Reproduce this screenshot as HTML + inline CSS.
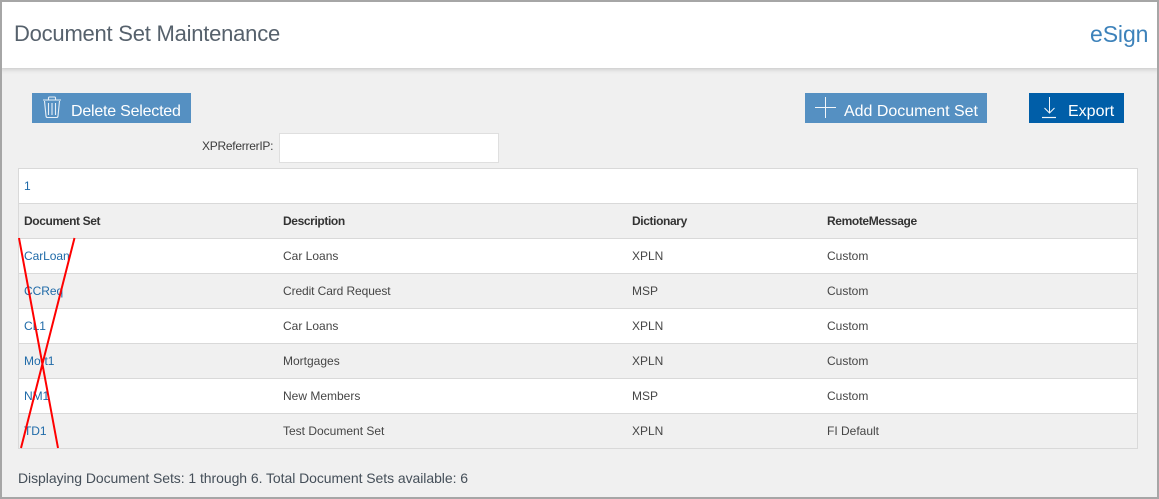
<!DOCTYPE html>
<html lang="en">
<head>
<meta charset="utf-8">
<title>Document Set Maintenance</title>
<style>
html,body{margin:0;padding:0;}
body{width:1159px;height:499px;overflow:hidden;background:#f0f0f0;font-family:"Liberation Sans",Arial,sans-serif;position:relative;}
.frame{position:absolute;left:0;top:0;width:1155px;height:495px;border:2px solid #a6a6a6;z-index:5;pointer-events:none;}
.hdr{position:absolute;left:0;top:0;width:1159px;height:68px;background:#fff;box-shadow:0 1px 5px rgba(0,0,0,.2);}
.t{position:absolute;white-space:nowrap;line-height:16px;}
.h1{left:14px;top:21px;font-size:22px;line-height:26px;color:#56616c;letter-spacing:-.23px;}
.brand{left:1090px;top:21px;font-size:23px;line-height:26px;color:#3d82ba;letter-spacing:-.1px;}
.btn{position:absolute;top:93px;height:30px;background:#5590c2;color:#fff;}
.btn span{position:absolute;top:10px;white-space:nowrap;font-size:16px;line-height:18px;}
.btn svg{position:absolute;left:0;top:0;}
.lbl{left:202px;top:138px;font-size:12px;color:#3c3c3c;letter-spacing:-.27px;}
.inp{position:absolute;left:279px;top:133px;width:218px;height:28px;background:#fff;border:1px solid #dfdfdf;}
.tbl{position:absolute;left:18px;top:168px;width:1118px;height:279px;border:1px solid #d9d9d9;background:#fff;}
.r{position:absolute;left:0;width:1118px;height:34px;border-top:1px solid #d9d9d9;}
.g{background:#f0f0f0;}
.c{font-size:12px;color:#454545;}
.b{font-weight:bold;color:#333;font-size:12px;letter-spacing:-.38px;}
.a{font-size:12px;color:#1f6aa8;letter-spacing:-.05px;}
.foot{left:18px;top:470px;font-size:14px;color:#454f59;letter-spacing:-.06px;}
svg.x{position:absolute;left:0;top:0;z-index:3;}
</style>
</head>
<body>
<div class="hdr"></div>
<div class="t h1">Document Set Maintenance</div>
<div class="t brand">eSign</div>

<div class="btn" style="left:32px;width:159px;">
<svg width="40" height="30" viewBox="0 0 40 30" fill="none" stroke="#e6eff7" stroke-width="1.1">
<path d="M11 7H29M16.500 7V5Q16.500 4 17.500 4H22.500Q23.500 4 23.500 5V7"/>
<path d="M12.500 8L14 23Q14.200 24.500 15.500 24.500H24.500Q25.800 24.500 26 23L27.500 8"/>
<path d="M16.500 10V22M20 10V22M23.500 10V22"/>
</svg>
<span style="left:39px;letter-spacing:-.22px;">Delete Selected</span>
</div>

<div class="btn" style="left:805px;width:182px;">
<svg width="40" height="30" viewBox="0 0 40 30" fill="none" stroke="#f2f6fa" stroke-width="1">
<path d="M20.500 4V25M10 14.500H31"/>
</svg>
<span style="left:39px;letter-spacing:-.02px;">Add Document Set</span>
</div>

<div class="btn" style="left:1029px;width:95px;background:#005ea8;">
<svg width="40" height="30" viewBox="0 0 40 30" fill="none" stroke="#f2f6fa" stroke-width="1">
<path d="M20.500 4V20M15.500 15L20.500 20L25.500 15"/>
<path d="M13 24.500H27" stroke-width="1.200"/>
</svg>
<span style="left:39px;">Export</span>
</div>

<div class="t lbl">XPReferrerIP:</div>
<div class="inp"></div>

<div class="tbl">
<div class="t a" style="left:5px;top:9px;">1</div>
<div class="r g" style="top:34px;">
<div class="t b" style="left:5px;top:9px;">Document Set</div>
<div class="t b" style="left:264px;top:9px;">Description</div>
<div class="t b" style="left:613px;top:9px;">Dictionary</div>
<div class="t b" style="left:808px;top:9px;">RemoteMessage</div>
</div>
<div class="r" style="top:69px;">
<div class="t a" style="left:5px;top:9px;">CarLoan</div>
<div class="t c" style="left:264px;top:9px;">Car Loans</div>
<div class="t c" style="left:613px;top:9px;">XPLN</div>
<div class="t c" style="left:808px;top:9px;">Custom</div>
</div>
<div class="r g" style="top:104px;">
<div class="t a" style="left:5px;top:9px;">CCReq</div>
<div class="t c" style="left:264px;top:9px;letter-spacing:-.1px;">Credit Card Request</div>
<div class="t c" style="left:613px;top:9px;">MSP</div>
<div class="t c" style="left:808px;top:9px;">Custom</div>
</div>
<div class="r" style="top:139px;">
<div class="t a" style="left:5px;top:9px;">CL1</div>
<div class="t c" style="left:264px;top:9px;">Car Loans</div>
<div class="t c" style="left:613px;top:9px;">XPLN</div>
<div class="t c" style="left:808px;top:9px;">Custom</div>
</div>
<div class="r g" style="top:174px;">
<div class="t a" style="left:5px;top:9px;">Mort1</div>
<div class="t c" style="left:264px;top:9px;">Mortgages</div>
<div class="t c" style="left:613px;top:9px;">XPLN</div>
<div class="t c" style="left:808px;top:9px;">Custom</div>
</div>
<div class="r" style="top:209px;">
<div class="t a" style="left:5px;top:9px;">NM1</div>
<div class="t c" style="left:264px;top:9px;">New Members</div>
<div class="t c" style="left:613px;top:9px;">MSP</div>
<div class="t c" style="left:808px;top:9px;">Custom</div>
</div>
<div class="r g" style="top:244px;">
<div class="t a" style="left:5px;top:9px;">TD1</div>
<div class="t c" style="left:264px;top:9px;">Test Document Set</div>
<div class="t c" style="left:613px;top:9px;">XPLN</div>
<div class="t c" style="left:808px;top:9px;">FI Default</div>
</div>
</div>

<div class="t foot">Displaying Document Sets: 1 through 6. Total Document Sets available: 6</div>

<svg class="x" width="1159" height="499" viewBox="0 0 1159 499" fill="none" stroke="#ff0000" stroke-width="2">
<path d="M19 238L58 448M74.500 238L21 448"/>
</svg>
<div class="frame"></div>
</body>
</html>
